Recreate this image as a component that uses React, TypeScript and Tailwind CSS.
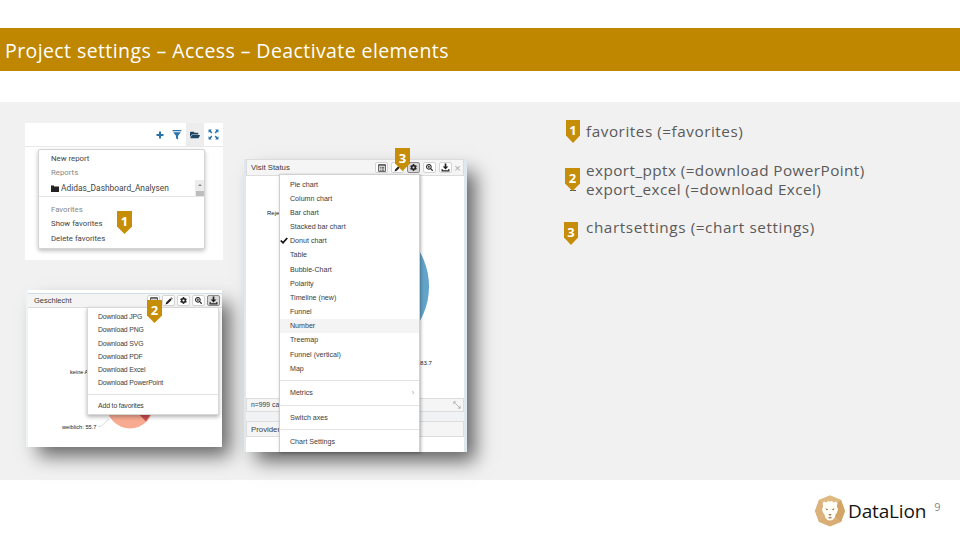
import React from "react";
import { FaFolderOpen, FaCog, FaSearchPlus } from "react-icons/fa";

const brand = "font-['Open_Sans','Noto_Sans',sans-serif]";

function Badge({ n, className = "" }: { n: string; className?: string }) {
  return (
    <div className={`flex h-[23px] justify-center bg-[#c68d08] font-['Open_Sans',sans-serif] text-[13px] leading-[20px] font-bold text-white [clip-path:polygon(0_0,100%_0,100%_67%,50%_100%,0_67%)] ${className}`}>
      {n}
    </div>
  );
}

function ListIcon() {
  return (
    <svg viewBox="0 0 14 14" className="size-[8px]" fill="none" stroke="#333" strokeWidth="1.4">
      <path d="M1 1h12v12H1zM1 3h12M3 6h2M6 6h5M3 8.500h2M6 8.500h5M3 11h2M6 11h5" />
    </svg>
  );
}

function PencilIcon() {
  return (
    <svg viewBox="0 0 16 16" className="size-[8px]" fill="#222">
      <path d="M1 15l1.500-4.500L10.500 2.500l3 3L5.500 13.500zM11.500 1.500l1-1 3 3-1 1z" />
    </svg>
  );
}

function DownloadIcon() {
  return (
    <svg viewBox="0 0 16 16" className="size-[9px]" fill="#222">
      <path d="M6.500 1h3v5H13l-5 5.500L3 6h3.500zM1 10.500h2v2.500h10v-2.500h2V15H1z" />
    </svg>
  );
}

function Tool({ children, active = false }: { children: React.ReactNode; active?: boolean }) {
  return (
    <div className={`flex h-[11px] w-[13px] items-center justify-center rounded-[2px] border text-[#222] ${active ? "border-[#8c8c8c] bg-[#d8d8d8]" : "border-[#d4d4d4] bg-white"}`}>
      {children}
    </div>
  );
}

function Tools({ active, className }: { active: "settings" | "download"; className: string }) {
  return (
    <div className={`flex items-center ${className}`}>
      <Tool><ListIcon /></Tool>
      <Tool><PencilIcon /></Tool>
      <Tool active={active === "settings"}><FaCog size={7} /></Tool>
      <Tool><FaSearchPlus size={7} /></Tool>
      <Tool active={active === "download"}><DownloadIcon /></Tool>
    </div>
  );
}

function ReportsShot() {
  return (
    <div className="relative h-[137px] w-[198px] bg-white font-[Roboto,sans-serif] text-[7.8px] text-[#444]">
      <div className="flex h-[24px] items-stretch justify-end border-b border-[#e8e8e8] text-[#2a72ae]">
        <div className="flex w-[17px] items-center justify-center">
          <svg viewBox="0 0 16 16" className="size-[8px]" fill="currentColor"><path d="M6 1h4v5h5v4h-5v5H6v-5H1V6h5z" /></svg>
        </div>
        <div className="flex w-[18px] items-center justify-center">
          <svg viewBox="0 0 16 16" className="size-[10px]" fill="currentColor"><path d="M1 0h14v2H1zM2 3.500h12L9.700 9v6l-3.400-2V9z" /></svg>
        </div>
        <div className="flex w-[18px] items-center justify-center bg-[#ededed] text-[#1d4566]"><FaFolderOpen size={10} /></div>
        <div className="flex w-[19px] items-center justify-center">
          <svg viewBox="0 0 20 20" className="size-[11px]" fill="currentColor">
            <path d="M1 1h6L5 3l3 3-2 2-3-3-2 2zM19 1v6l-2-2-3 3-2-2 3-3-2-2zM1 19v-6l2 2 3-3 2 2-3 3 2 2zM19 19h-6l2-2-3-3 2-2 3 3 2-2z" />
          </svg>
        </div>
      </div>
      <div className="absolute top-[26px] left-[13px] flex h-[100px] w-[167px] flex-col rounded-[2px] border border-[#d4d4d4] bg-white pt-[2px] shadow-[0_2px_4px_rgba(0,0,0,0.25)]">
        <div className="h-[14px] pl-[12px] leading-[14px]">New report</div>
        <div className="h-[14px] pl-[12px] leading-[14px] text-[#888]">Reports</div>
        <div className="flex h-[17px] items-center border-b border-[#e5e5e5] pl-[12px] text-[8.4px] leading-[14px]">
          <svg viewBox="0 0 16 14" className="mr-[2px] h-[7px] w-[8px]" fill="#222"><path d="M0 1h6v2h10v11H0z" /></svg>
          Adidas_Dashboard_Analysen
          <div className="ml-auto flex h-[16px] w-[9px] flex-col items-center justify-between bg-[#ececec] pt-[4px]">
            <div className="size-0 border-x-2 border-b-2 border-x-transparent border-b-[#888]" />
            <div className="h-[5px] w-[8px] bg-[#bdbdbd]" />
          </div>
        </div>
        <div className="mt-[5px] h-[15px] pl-[12px] leading-[15px] text-[#888]">Favorites</div>
        <div className="h-[14px] pl-[12px] leading-[14px]">Show favorites</div>
        <div className="h-[15px] pl-[12px] leading-[15px]">Delete favorites</div>
      </div>
      <Badge n="1" className="absolute top-[88px] left-[92px] w-[15px]" />
    </div>
  );
}

const downloads = ["Download JPG", "Download PNG", "Download SVG", "Download PDF", "Download Excel", "Download PowerPoint"];

function DownloadShot() {
  return (
    <div className="relative ml-px h-[157px] w-[196px] bg-white font-['Liberation_Sans',sans-serif] text-[6.9px] text-[#3c3c3c] shadow-[10px_11px_18px_-2px_rgba(0,0,0,0.58)]">
      <div className="flex h-full flex-col border-l-2 border-[#eef3f5] pt-[3px]">
        <div className="flex h-[15px] items-center border-y border-t-[#cfdfe8] border-b-[#ddd] bg-[#f4f4f4] pl-[6px]">
          <span className="text-[7.5px]">Geschlecht</span>
          <Tools active="download" className="mr-[2px] ml-auto gap-[2px]" />
        </div>
        <svg viewBox="0 0 194 139" className="h-[139px] w-[194px]">
          <circle cx="102" cy="97" r="23.500" fill="#f9ab92" />
          <path d="M102 97L125 102L118 113.500Z" fill="#cf4b51" />
          <path d="M70 118.500C76 118.500 75 115 81 111" fill="none" stroke="#b7c7c7" strokeWidth=".6" />
          <text x="42" y="65.500" fontSize="5.600" fill="#222">keine A</text>
          <text x="34" y="120.500" fontSize="5.700" fill="#222">weiblich: 55.7</text>
        </svg>
      </div>
      <div className="absolute top-[17px] left-[61px] h-[108px] w-[132px] border border-[#d8d8d8] bg-white pt-[2px] tracking-[-0.14px] shadow-[0_2px_4px_rgba(0,0,0,0.3)]">
        {downloads.map((d) => <div key={d} className="h-[13.27px] pl-[10px] leading-[13.27px]">{d}</div>)}
        <div className="mt-[4px] border-t border-[#e2e2e2] pt-[4px] pl-[10px] leading-[13px]">Add to favorites</div>
      </div>
      <Badge n="2" className="absolute top-[10px] left-[121px] w-[15px]" />
    </div>
  );
}

const charts = ["Pie chart", "Column chart", "Bar chart", "Stacked bar chart", "Donut chart", "Table", "Bubble-Chart", "Polarity", "Timeline (new)", "Funnel", "Number", "Treemap", "Funnel (vertical)", "Map"];

function SettingsShot() {
  return (
    <div className="relative -ml-px h-[293px] w-[223px] bg-[#f0f2f3] font-['Liberation_Sans',sans-serif] text-[7.1px] text-[#3c3c3c] shadow-[10px_11px_18px_-2px_rgba(0,0,0,0.6)]">
      <div className="flex h-full flex-col border-r-[3px] border-l-2 border-[#dfe8ed]">
        <div className="flex h-[17px] shrink-0 items-center border border-[#dcdcdc] bg-[#f5f5f5] pl-[4px]">
          <span className="text-[7.8px]">Visit Status</span>
          <Tools active="settings" className="ml-auto gap-[3px]" />
          <span className="w-[11px] text-center text-[11px] leading-[10px] text-[#aaa]">×</span>
        </div>
        <svg viewBox="0 0 218 222" className="h-[222px] w-[218px] shrink-0 bg-white">
          <circle cx="113" cy="110.500" r="70" fill="#62a3c9" />
          <text x="21" y="39" fontSize="6" fill="#222">Reje</text>
          <text x="174" y="188.500" fontSize="6.200" fill="#222">83.7</text>
        </svg>
        <div className="flex h-[14px] shrink-0 items-center border border-[#ddd] bg-[#f5f5f5] pr-[2px] pl-[4px] text-[6.8px]">
          n=999 cases
          <svg viewBox="0 0 10 10" className="ml-auto size-[8px]" fill="none" stroke="#aaa"><path d="M1 4V1h3M1 1l8 8M6 9h3V6" /></svg>
        </div>
        <div className="mt-[9px] h-[16px] shrink-0 border border-[#ddd] bg-[#f5f5f5] pl-[4px] text-[7.8px] leading-[15px]">Provider</div>
        <div className="flex-1 bg-white" />
      </div>
      <div className="absolute top-[15px] left-[35px] h-[278px] w-[141px] border border-b-0 border-[#d0d0d0] bg-white pt-[2.5px] shadow-[1px_1px_3px_rgba(0,0,0,0.3)]">
        {charts.map((c) => (
          <div key={c} className={`relative h-[14.18px] pl-[10px] leading-[14.18px] ${c === "Number" ? "bg-[#f4f4f4]" : ""}`}>
            {c === "Donut chart" && (
              <svg viewBox="0 0 16 14" className="absolute top-[3px] left-0 h-[7px] w-[8px]" fill="none" stroke="#111" strokeWidth="3.500"><path d="M1.500 7l4.500 4.500L14.500 2" /></svg>
            )}
            {c}
          </div>
        ))}
        <div className="mt-[4px] flex h-[25px] items-center justify-between border-t border-[#e3e3e3] pt-px pr-[5px] pl-[10px]">Metrics<span className="text-[#999]">›</span></div>
        <div className="flex h-[24px] items-center border-t border-[#e3e3e3] pt-px pl-[10px]">Switch axes</div>
        <div className="flex h-[25px] items-center border-t border-[#e3e3e3] pt-px pl-[10px]">Chart Settings</div>
      </div>
      <Badge n="3" className="absolute top-[-11px] left-[151px] w-[15px]" />
    </div>
  );
}

function Logo() {
  return (
    <svg viewBox="0 0 32 32" className="size-[32px]">
      <path d="M16 .5L27 5L31 16L27 27L16 31.500L5 27L1 16L5 5Z" fill="#d9ae74" />
      <path d="M16 .5L27 5L16 16L5 5Z" fill="#dfb982" />
      <path d="M27 5L31 16L27 27L16 16Z" fill="#d2a466" />
      <path d="M5 5L16 16L5 27L1 16Z" fill="#dbb27b" />
      <path d="M8.500 8.500L10 6.500L12.500 7.500L14 6L16 6.500L18 6L19.500 7.500L22 6.500L23.500 8.500L22.800 11L24 14.500L22.800 18L21.500 19.500L20.800 22.500L18.500 25L16 25.500L13.500 25L11.200 22.500L10.500 19.500L9.200 18L8 14.500L9.200 11Z" fill="#fffdf8" />
      <path d="M11.500 13l3 1.700-2.200.5zM20.500 13l-3 1.700 2.200.5zM14.300 19h3.400L16 21.200zM13.500 23l2.500-1.200 2.500 1.200-2.500 .5z" fill="#a87f4e" />
    </svg>
  );
}

export default function App() {
  return (
    <div className={`flex h-[540px] w-[960px] flex-col overflow-hidden bg-white ${brand}`}>
      <header className="mt-[28px] flex h-[43px] shrink-0 items-center bg-[#bf8600] pt-[2px] pl-[5px] text-[19.5px] tracking-[0.41px] whitespace-nowrap text-white">
        Project settings – Access – Deactivate elements
      </header>
      <main className="mt-[31px] flex h-[378px] shrink-0 bg-[#f1f1f1] pl-[25px] whitespace-nowrap">
        <section className="flex w-[220px] flex-col gap-[30px] pt-[21px]">
          <ReportsShot />
          <DownloadShot />
        </section>
        <section className="w-[320px] pt-[57px]"><SettingsShot /></section>
        <section className="flex flex-col pt-[18px] text-[15.3px] leading-[19px] text-[#5a5a5a]">
          <div className="flex h-[41px]"><Badge n="1" className="mr-[6px] ml-px w-[14px]" /><p className="pt-[2px] tracking-[0.53px]">favorites (=favorites)</p></div>
          <div className="flex h-[57px]">
            <div className="mr-[6px] flex flex-col items-center pt-[7px]"><Badge n="2" className="w-[15px]" /><div className="-mt-px h-px w-[6px] bg-[#555]" /></div>
            <div className="tracking-[0.42px]"><p>export_pptx (=download PowerPoint)</p><p>export_excel (=download Excel)</p></div>
          </div>
          <div className="flex"><div className="mr-[8px] -ml-px pt-[4px]"><Badge n="3" className="w-[14px]" /></div><p className="tracking-[0.58px]">chartsettings (=chart settings)</p></div>
        </section>
      </main>
      <footer className="flex flex-1 pt-[15px] pl-[814px]">
        <Logo />
        <span className="ml-[2px] text-[19px] leading-[32px] tracking-[-0.15px] text-[#151515]">DataLion</span>
        <span className="ml-[8px] pt-[4px] text-[11px] text-[#888]">9</span>
      </footer>
    </div>
  );
}
